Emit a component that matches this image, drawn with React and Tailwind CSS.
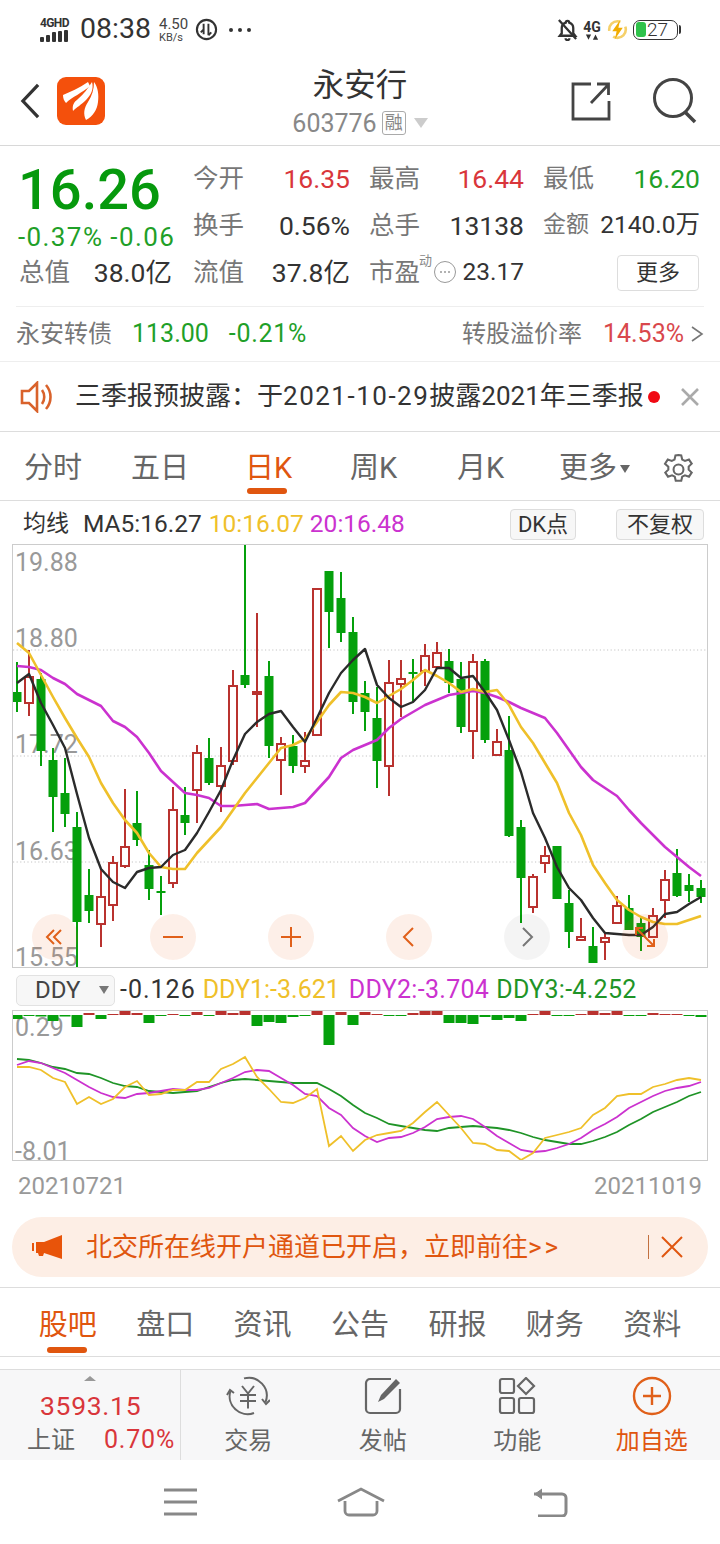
import React from "react";

const RED = "#b9322f";
const GREEN = "#05a00c";

// [kind, wickTop, wickBottom, bodyTop, bodyBottom], first candle at x=17, one every 12px
const candles = [
  ["g",662,712,692,702],["r",650,716,677,703],["g",673,766,679,751],["g",748,832,760,797],
  ["g",758,827,793,814],["g",812,967,827,922],["g",869,923,895,911],["r",868,947,897,924],
  ["r",856,921,863,905],["r",789,868,847,866],["g",791,846,823,840],["g",850,900,865,889],
  ["g",876,915,891,893],["r",787,888,810,883],["g",787,835,815,823],["r",745,823,753,790],
  ["g",738,785,758,783],["r",747,812,766,786],["r",670,765,686,761],["g",544,688,675,685],
  ["r",613,727,692,694],["g",661,758,676,746],["r",737,795,744,760],["g",735,773,746,766],
  ["r",732,773,761,766],["r",589,735,589,735],["g",571,648,571,612],["g",572,642,598,633],
  ["g",617,714,632,702],["g",681,731,693,712],["g",687,788,718,761],["r",660,796,683,766],
  ["r",660,717,679,684],["g",659,702,672,674],["r",644,686,656,671],["r",642,668,653,667],
  ["g",649,693,661,683],["g",662,733,679,727],["r",654,759,662,731],["g",659,743,661,740],
  ["r",729,756,742,755],["g",716,837,750,836],["g",820,923,827,878],["r",874,913,877,907],
  ["r",846,873,856,863],["g",846,899,846,899],["g",890,948,903,932],["r",918,940,937,940],
  ["g",927,963,946,963],["r",933,960,938,942],["r",896,923,906,923],["g",895,930,908,930],
  ["g",917,951,923,937],["r",908,937,916,937],["r",870,918,880,900],["g",849,897,873,896],
  ["g",874,902,885,891],["g",880,903,888,897],
];

const ma5 = [683,674,703,725,748,794,838,869,882,888,872,868,867,855,850,833,812,790,760,734,722,714,711,727,742,718,693,673,660,649,685,698,707,702,690,668,668,678,676,692,710,740,772,813,838,867,888,900,918,933,934,935,935,927,914,912,904,897];
const ma10 = [643,653,675,697,718,738,757,783,803,820,833,853,867,869,869,853,840,827,810,793,778,763,748,745,739,722,705,692,693,697,703,696,689,680,670,676,683,692,689,692,690,705,727,743,763,783,813,835,865,883,900,910,917,922,924,924,920,916];
const ma20 = [666,667,670,678,684,694,700,706,721,727,737,753,771,782,793,795,798,806,806,805,804,809,808,807,803,790,777,758,750,745,740,728,719,712,705,700,695,693,691,693,697,702,708,713,718,733,750,767,780,788,796,810,823,835,847,857,867,876];

const ddy1 = [1067,1067,1070,1078,1082,1104,1097,1104,1099,1087,1081,1095,1094,1090,1090,1082,1082,1069,1064,1057,1077,1089,1102,1103,1098,1089,1146,1136,1151,1140,1135,1133,1131,1123,1112,1102,1115,1128,1143,1144,1150,1151,1160,1153,1138,1135,1132,1128,1115,1108,1096,1094,1094,1087,1084,1080,1078,1080];
const ddy2 = [1065,1061,1063,1068,1073,1080,1087,1093,1097,1098,1094,1093,1091,1089,1090,1090,1088,1083,1078,1072,1070,1071,1078,1085,1094,1096,1108,1115,1128,1136,1142,1138,1137,1133,1127,1119,1117,1116,1119,1127,1136,1143,1150,1152,1151,1148,1144,1138,1130,1124,1117,1108,1102,1096,1091,1088,1086,1082];
const ddy3 = [1059,1060,1063,1067,1069,1073,1074,1078,1083,1086,1087,1091,1092,1093,1092,1091,1087,1083,1080,1079,1080,1081,1082,1083,1083,1083,1089,1096,1105,1113,1118,1124,1126,1128,1130,1131,1128,1127,1126,1127,1128,1130,1133,1137,1140,1142,1144,1144,1141,1137,1132,1125,1119,1112,1107,1102,1096,1092];

// signed bar heights around the zero line, positive is red (up)
const bars = [-4,-1,-1.5,-6,-1.5,-12,2,-4,1,4.5,2,-8,-1,1,-1,3,-1,4.5,2,4,-11,-7,-8,-2,-1,4,-30,3,-10,3,1,-1,-1,2,4,4,-8,-8,-9,-2,-5,-3,-6,1,4.5,-1,-1,1,4.5,2,4.5,-1,-1,2,1,1,-1,-2];

function pts(values) {
  return values.map((y, i) => `${17 + i * 12},${y}`).join(" ");
}

function PriceChart() {
  return (
    <svg viewBox="13 545 694 422" className="absolute left-0 top-0 w-[694px] h-[422px]">
      {[650, 756, 862].map(y => (
        <line key={y} x1="13" x2="707" y1={y} y2={y} stroke="#c4c4c4" strokeWidth="1" strokeDasharray="1.2 2.4" />
      ))}
      {candles.map(([kind, wt, wb, bt, bb], i) => {
        const x = 17 + i * 12;
        const color = kind === "g" ? GREEN : RED;
        return (
          <g key={i}>
            <line x1={x} x2={x} y1={wt} y2={wb} stroke={color} strokeWidth="2" />
            {kind === "g"
              ? <rect x={x - 4.5} y={bt} width="9" height={Math.max(bb - bt, 2)} fill={color} />
              : <rect x={x - 4} y={bt} width="8" height={Math.max(bb - bt, 2)} fill="#fff" stroke={color} strokeWidth="2" />}
          </g>
        );
      })}
      <polyline points={pts(ma20)} fill="none" stroke="#cb32cf" strokeWidth="2.6" strokeLinejoin="round" />
      <polyline points={pts(ma10)} fill="none" stroke="#efc02a" strokeWidth="2.6" strokeLinejoin="round" />
      <polyline points={pts(ma5)} fill="none" stroke="#2b2b2b" strokeWidth="2.4" strokeLinejoin="round" />
    </svg>
  );
}

function DdyChart() {
  return (
    <svg viewBox="13 1011 694 149" className="absolute left-0 top-0 w-[694px] h-[149px]">
      {bars.map((h, i) => {
        const x = 17 + i * 12;
        const up = h > 0;
        return (
          <rect key={i} x={x - 5.5} y={up ? 1015 - h : 1015} width="11" height={Math.abs(h)}
            fill={up ? RED : GREEN} />
        );
      })}
      <polyline points={pts(ddy3)} fill="none" stroke="#1f9427" strokeWidth="1.8" />
      <polyline points={pts(ddy2)} fill="none" stroke="#cb32cf" strokeWidth="1.8" />
      <polyline points={pts(ddy1)} fill="none" stroke="#efc02a" strokeWidth="1.8" />
    </svg>
  );
}

function StatusBar() {
  return (
    <div className="h-[56px] pt-[3px] flex items-center text-[#333]">
      <div className="ml-[40px] w-[32px] flex flex-col">
        <span className="text-[12px] leading-[12px] font-bold tracking-[-0.6px] whitespace-nowrap">4GHD</span>
        <div className="flex items-end gap-[2px] h-[12px] mt-[1px]">
          {[5, 7, 10, 11, 12].map(h => (
            <div key={h} className="w-[4px] bg-[#333] rounded-[1px]" style={{ height: h }} />
          ))}
        </div>
      </div>
      <span className="ml-[8px] text-[28.5px] leading-none">08:38</span>
      <div className="ml-[8px] flex flex-col items-start text-[#444]">
        <span className="text-[15px] leading-[16px]">4.50</span>
        <span className="text-[11px] leading-[12px]">KB/s</span>
      </div>
      <svg viewBox="0 0 24 24" className="ml-[7px] w-[23px] h-[23px]" fill="none" stroke="#333">
        <circle cx="12" cy="12" r="10" strokeWidth="2.2" />
        <path d="M9 6v11M14 6v12M9 12l-3 3M14 18l3-3" strokeWidth="2" />
      </svg>
      <div className="ml-[11px] flex gap-[5px]">
        {[0, 1, 2].map(i => <div key={i} className="w-[4px] h-[4px] rounded-full bg-[#333]" />)}
      </div>
      <div className="ml-auto mr-[42px] flex items-center">
        <svg viewBox="0 0 24 24" className="w-[23px] h-[23px]" fill="none" stroke="#333" strokeWidth="2.4">
          <path d="M12 3a1.8 1.8 0 0 1 1.8 1.8A6 6 0 0 1 18 10.5V16l2 2.5H4L6 16v-5.5a6 6 0 0 1 4.2-5.7A1.8 1.8 0 0 1 12 3z" />
          <path d="M10 21a2 2 0 0 0 4 0M3 2l18 20" />
        </svg>
        <div className="ml-[4px] w-[18px] flex flex-col items-center">
          <span className="text-[14px] leading-[14px] font-bold">4G</span>
          <svg viewBox="0 0 16 6" className="w-[14px] h-[6px]" fill="#333"><path d="M1 0h6L4 6zM9 6h6l-3-6z" /></svg>
        </div>
        <svg viewBox="0 0 24 24" className="ml-[6px] w-[21px] h-[23px]" fill="none">
          <circle cx="12" cy="12" r="9.5" stroke="#f5d06a" strokeWidth="3" strokeDasharray="20 8" />
          <path d="M15 1L6 14h5l-2 9 9-13h-5z" fill="#f2ad00" />
        </svg>
        <div className="ml-[5px] w-[45px] h-[20px] border-[1.5px] border-[#333] rounded-[7px] flex items-center relative">
          <div className="w-[10px] h-[15px] bg-[#2fc24a] rounded-[3px] ml-[2px]" />
          <span className="ml-[1px] text-[19px] font-light leading-none">27</span>
          <div className="absolute right-[-4px] top-[4px] w-[2px] h-[9px] bg-[#333] rounded-r-sm" />
        </div>
      </div>
    </div>
  );
}

function Header() {
  return (
    <div className="h-[90px] border-b border-[#d8d8d8] flex items-center">
      <div className="w-[228px] flex items-center">
        <svg viewBox="0 0 24 40" className="ml-[19px] w-[23px] h-[38px]" fill="none" stroke="#333" strokeWidth="3.4">
          <path d="M20 3L4 20l16 17" />
        </svg>
        <div className="ml-[15px] w-[48px] h-[48px] rounded-[9px] bg-[#f4500c]">
          <svg viewBox="0 0 48 48" className="w-[48px] h-[48px]" fill="#fff">
            <path d="M6 18C13 15 22 11 31 5L33 9C25 16 15 20 9 26 7 24 6 21 6 18z" />
            <path d="M16 34C15 28 17 25 21 22 27 17 31 11 35 5 37 12 34 18 29 23 24 28 20 30 16 34z" />
            <path d="M29 43C26 37 27 31 31 25 35 19 37 12 37 5 41 10 42 18 41 25 40 33 36 39 29 43z" />
          </svg>
        </div>
      </div>
      <div className="flex-1 flex flex-col items-center mt-[8px]">
        <span className="text-[31.5px] leading-[38px] text-[#333]">永安行</span>
        <div className="flex items-center h-[38px] mt-[-1px]">
          <span className="text-[25px] text-[#888] leading-none">603776</span>
          <span className="ml-[5px] w-[24px] h-[24px] border border-[#aaa] rounded-[3px] text-[18px] leading-[22px] text-center text-[#888]">融</span>
          <div className="ml-[8px] w-0 h-0 border-x-[7.5px] border-x-transparent border-t-[10px] border-t-[#ccc]" />
        </div>
      </div>
      <div className="w-[228px] flex items-center justify-end">
        <svg viewBox="0 0 40 40" className="w-[40px] h-[40px] mr-[41px]" fill="none" stroke="#444" strokeWidth="2.8">
          <path d="M20 3H2v35h36V20M20 22L37 4M26 3h11.5v11" />
        </svg>
        <svg viewBox="0 0 46 46" className="w-[46px] h-[46px] mr-[22px]" fill="none" stroke="#444" strokeWidth="3">
          <circle cx="21" cy="20" r="18.5" />
          <path d="M33 34l10 10" strokeWidth="3.6" />
        </svg>
      </div>
    </div>
  );
}

function Cell({ label, value, color }) {
  return (
    <div className="flex justify-between items-center">
      <span className="text-[25.5px] text-[#777]">{label}</span>
      <span className={"text-[26.5px] " + (color || "text-[#333]")}>{value}</span>
    </div>
  );
}

function Quote() {
  return (
    <div className="pt-[9px] h-[161px] mx-[16px] border-b border-[#eee] flex">
      <div className="w-[177px] pl-[2px]">
        <div className="h-[71px] text-[56px] leading-[71px] font-medium text-[#06990d]">16.26</div>
        <div className="h-[23px] flex items-center text-[26px] tracking-[1.4px] text-[#1fa028] whitespace-nowrap">
          <span>-0.37%</span><span className="ml-[7px]">-0.06</span>
        </div>
        <div className="h-[47px] flex items-center justify-between text-[#333] pl-[1px] pr-[21px] whitespace-nowrap">
          <span className="text-[25.5px] text-[#777]">总值</span>
          <span className="text-[26.5px]">38.0亿</span>
        </div>
      </div>
      <div className="flex-1 grid grid-cols-[157px_155px_157px] gap-x-[19px] auto-rows-[47px] -mr-[4px]">
        <Cell label="今开" value="16.35" color="text-[#d9363b]" />
        <Cell label="最高" value="16.44" color="text-[#d9363b]" />
        <Cell label="最低" value="16.20" color="text-[#1fa028]" />
        <Cell label="换手" value="0.56%" />
        <Cell label="总手" value="13138" />
        <div className="flex justify-between items-center whitespace-nowrap">
          <span className="text-[23px] text-[#777]">金额</span>
          <span className="text-[24.5px] text-[#333]">2140.0万</span>
        </div>
        <Cell label="流值" value="37.8亿" />
        <div className="flex items-center justify-between relative">
          <span className="text-[25.5px] text-[#777]">市盈</span>
          <span className="absolute left-[50px] top-[2px] text-[13px] text-[#888]">动</span>
          <div className="absolute left-[65px] top-[12px] w-[22px] h-[22px] rounded-full border-[1.5px] border-[#999] flex items-center justify-center gap-[1.5px]">
            {[0, 1, 2].map(i => <div key={i} className="w-[2.5px] h-[2.5px] rounded-full bg-[#999]" />)}
          </div>
          <span className="text-[24.5px] text-[#333]">23.17</span>
        </div>
        <div className="flex items-center justify-end">
          <button className="w-[82px] h-[36px] mr-[1px] border border-[#ddd] rounded-[4px] text-[22px] leading-none text-[#333]">更多</button>
        </div>
      </div>
    </div>
  );
}

function Convert() {
  return (
    <div className="h-[55px] px-[16px] flex items-center border-b border-[#eee] text-[25px] whitespace-nowrap">
      <span className="text-[24px] text-[#777]">永安转债</span>
      <span className="ml-[20px] text-[#1fa028]">113.00</span>
      <span className="ml-[20px] tracking-[0.7px] text-[#1fa028]">-0.21%</span>
      <span className="ml-auto text-[24px] text-[#777]">转股溢价率</span>
      <span className="ml-[21px] text-[#d9484c]">14.53%</span>
      <svg viewBox="0 0 14 18" className="ml-[6px] w-[14px] h-[18px]" fill="none" stroke="#777" strokeWidth="1.6"><path d="M2 2l10 7-10 7" /></svg>
    </div>
  );
}

function Notice() {
  return (
    <div className="h-[70px] flex items-center border-b border-[#ddd]">
      <svg viewBox="0 0 34 32" className="ml-[20px] w-[34px] h-[32px]" fill="none" stroke="#d9622b" strokeWidth="2.6">
        <path d="M2 10h7l8-8v28l-8-8H2zM22 9c3 4 3 10 0 14M26 4c6 7 6 17 0 24" />
      </svg>
      <div className="ml-[21px] w-[565px] whitespace-nowrap text-[26px] text-[#333]">
        三季报预披露：于<span className="tracking-[1.5px]">2021-10-29</span>披露2021年三季报
      </div>
      <div className="ml-[8px] w-[12px] h-[12px] rounded-full bg-[#f00a14]" />
      <svg viewBox="0 0 20 20" className="ml-[20px] w-[20px] h-[20px]" stroke="#aaa" strokeWidth="2.6"><path d="M2 2l16 16M18 2L2 18" /></svg>
    </div>
  );
}

function PeriodTabs() {
  const tabs = [["分时", "w-[107px]"], ["五日", "w-[114px]"], ["日K", "w-[105px]"], ["周K", "w-[107px]"], ["月K", "w-[102px]"]];
  return (
    <div className="h-[69px] pt-[6px] flex items-center border-b border-[#ddd] text-[29px] text-[#666] whitespace-nowrap">
      {tabs.map(([t, w]) => (
        <div key={t} className={w + " pl-[24px] relative " + (t === "日K" ? "text-[#e0560f]" : "")}>
          {t}
          {t === "日K" && <div className="absolute left-[26px] top-[41px] w-[40px] h-[6px] rounded-full bg-[#e0560f]" />}
        </div>
      ))}
      <div className="pl-[24px] flex items-center">
        <span>更多</span>
        <div className="ml-[3px] w-0 h-0 border-x-[5px] border-x-transparent border-t-[8px] border-t-[#666]" />
      </div>
      <svg viewBox="0 0 24 24" className="ml-[32px] w-[33px] h-[33px]" fill="none" stroke="#666" strokeWidth="1.5">
        <path d="M12 1.5l2 .3.7 3 2 1 2.9-1 2 3-2.2 2.1v2.2l2.2 2.1-2 3-2.9-1-2 1-.7 3h-4l-.7-3-2-1-2.9 1-2-3 2.2-2.1v-2.2L2.2 7.8l2-3 2.9 1 2-1 .7-3z" />
        <circle cx="12" cy="12" r="3.6" />
      </svg>
    </div>
  );
}

function MaRow() {
  return (
    <div className="h-[43px] pt-[3px] flex items-center text-[24.5px] whitespace-nowrap">
      <span className="ml-[23px] text-[23px] text-[#333]">均线</span>
      <span className="ml-[14px] text-[#333]">MA5:16.27</span>
      <span className="ml-[7px] text-[#efc02a]">10:16.07</span>
      <span className="ml-[6px] text-[#cb32cf]">20:16.48</span>
      <div className="ml-auto mr-[16px] flex gap-[40px] text-[#333]">
        <div className="w-[66px] h-[31px] bg-[#f7f7f7] border border-[#ddd] rounded-[4px] text-[22px] leading-[29px] text-center">DK点</div>
        <div className="w-[88px] h-[31px] bg-[#f7f7f7] border border-[#ddd] rounded-[4px] text-[22px] leading-[29px] text-center">不复权</div>
      </div>
    </div>
  );
}

function RoundBtn({ left, grey, children }) {
  return (
    <div style={{ left }} className={"absolute top-[369px] w-[46px] h-[46px] rounded-full flex items-center justify-center " + (grey ? "bg-[#0000000b]" : "bg-[#e8601c1a]")}>
      <svg viewBox="0 0 24 24" className="w-[24px] h-[24px]" fill="none" stroke={grey ? "#777" : "#e0601a"} strokeWidth="2">
        {children}
      </svg>
    </div>
  );
}

function Axis({ top, children }) {
  return <span style={{ top }} className="absolute left-[2px] text-[25px] leading-[30px] text-[#999]">{children}</span>;
}

function MainChart() {
  return (
    <div className="mx-[12px] h-[424px] border border-[#ccc] relative">
      <Axis top={3}>19.88</Axis>
      <Axis top={79}>18.80</Axis>
      <Axis top={185}>17.72</Axis>
      <Axis top={292}>16.63</Axis>
      <Axis top={398}>15.55</Axis>
      <PriceChart />
      <RoundBtn left={19}><path d="M11 5l-7 7 7 7M18 5l-7 7 7 7" /></RoundBtn>
      <RoundBtn left={137}><path d="M2 12h20" /></RoundBtn>
      <RoundBtn left={255}><path d="M2 12h20M12 2v20" /></RoundBtn>
      <RoundBtn left={373}><path d="M16 3l-9 9 9 9" /></RoundBtn>
      <RoundBtn left={491} grey><path d="M8 3l9 9-9 9" /></RoundBtn>
      <RoundBtn left={609}><path d="M3 10V3h7M3 3l18 18M21 14v7h-7" /></RoundBtn>
    </div>
  );
}

function DdyRow() {
  return (
    <div className="h-[42px] pt-[2px] flex items-center whitespace-nowrap text-[25px]">
      <div className="ml-[16px] w-[99px] h-[31px] bg-[#f7f7f7] border border-[#e2e2e2] rounded-[5px] flex items-center text-[#444]">
        <span className="ml-[18px] text-[24px] leading-none">DDY</span>
        <div className="ml-[19px] w-0 h-0 border-x-[5px] border-x-transparent border-t-[8px] border-t-[#777]" />
      </div>
      <span className="ml-[5px] tracking-[1px] text-[#333]">-0.126</span>
      <span className="ml-[7px] text-[#efc02a]">DDY1:-3.621</span>
      <span className="ml-[9px] tracking-[0.3px] text-[#cb32cf]">DDY2:-3.704</span>
      <span className="ml-[7px] tracking-[0.3px] text-[#1f9427]">DDY3:-4.252</span>
    </div>
  );
}

function SubChart() {
  return (
    <>
      <div className="mx-[12px] h-[151px] border border-[#ccc] relative">
        <span className="absolute left-[2px] top-[2px] text-[25px] leading-[30px] text-[#999]">0.29</span>
        <span className="absolute left-[2px] top-[126px] text-[25px] leading-[30px] text-[#999]">-8.01</span>
        <DdyChart />
      </div>
      <div className="h-[49px] pt-[1px] px-[18px] flex items-center justify-between text-[24px] text-[#999]">
        <span>20210721</span>
        <span>20211019</span>
      </div>
    </>
  );
}

function Banner() {
  return (
    <div className="h-[78px] pt-[7px] border-b border-[#ddd]">
      <div className="mx-[12px] h-[60px] rounded-full bg-[#fdeee5] flex items-center whitespace-nowrap text-[#e0560f]">
        <svg viewBox="0 0 30 24" className="ml-[20px] w-[30px] h-[24px]" fill="#e8540a">
          <rect x="0" y="8" width="2" height="8" />
          <path d="M4 7h8L30 0v24l-18-6-1 3H7l-1-3H4z" />
        </svg>
        <span className="ml-[24px] text-[26px]">北交所在线开户通道已开启，立即前往<span className="tracking-[3px]">&gt;&gt;</span></span>
        <div className="ml-auto w-[1px] h-[24px] bg-[#c2703f]" />
        <svg viewBox="0 0 22 22" className="ml-[12px] mr-[25px] w-[22px] h-[22px]" stroke="#e0560f" strokeWidth="2"><path d="M1 1l20 20M21 1L1 21" /></svg>
      </div>
    </div>
  );
}

function SubTabs() {
  const tabs = ["股吧", "盘口", "资讯", "公告", "研报", "财务", "资料"];
  return (
    <div className="h-[69px] pt-[8px] px-[19px] grid grid-cols-7 items-center border-b border-[#ddd] text-[29px] text-[#666] whitespace-nowrap">
      {tabs.map((t, i) => (
        <div key={t} className={"text-center relative " + (i === 0 ? "text-[#e0560f]" : "")}>
          {t}
          {i === 0 && <div className="absolute left-[28px] top-[43px] w-[40px] h-[6px] rounded-full bg-[#e0560f]" />}
        </div>
      ))}
    </div>
  );
}

function ToolItem({ label, active, children }) {
  return (
    <div className="flex flex-col items-center">
      <div className="h-[52px] flex items-center justify-center">{children}</div>
      <span className={"mt-[4px] text-[24px] leading-[30px] " + (active ? "text-[#e0560f]" : "text-[#666]")}>{label}</span>
    </div>
  );
}

function Toolbar() {
  return (
    <div className="mt-[12px] h-[91px] border-t border-[#ddd] bg-[#f7f7f8] flex">
      <div className="w-[181px] border-r border-[#ddd] relative">
        <div className="absolute left-[84px] top-[6px] w-0 h-0 border-x-[6.5px] border-x-transparent border-b-[5px] border-b-[#999]" />
        <div className="pt-[20px] pl-[40px] text-[26.5px] tracking-[0.7px] leading-[32px] text-[#d9363b]">3593.15</div>
        <div className="mt-[1px] pl-[27px] pr-[5px] flex justify-between items-center text-[25px] leading-[34px]">
          <span className="text-[24px] text-[#666]">上证</span>
          <span className="tracking-[0.8px] text-[#d9363b]">0.70%</span>
        </div>
      </div>
      <div className="flex-1 grid grid-cols-4 pr-[1px]">
        <ToolItem label="交易">
          <svg viewBox="0 0 44 42" className="w-[44px] h-[42px]" fill="none" stroke="#666" strokeWidth="2">
            <path d="M18 3.4A18 18 0 0 1 39.6 27M28 38A18 18 0 0 1 4.4 16" />
            <path d="M36 24l4 5 4-4M1 20l3-5 4 3" />
            <path d="M16 11l6 7.5L28 11M14 20h16M14 26h16M22 18.500v15" />
          </svg>
        </ToolItem>
        <ToolItem label="发帖">
          <svg viewBox="0 0 38 38" className="w-[38px] h-[38px]" fill="none" stroke="#666" strokeWidth="2.2">
            <path d="M27 2H6a4 4 0 0 0-4 4v26a4 4 0 0 0 4 4h26a4 4 0 0 0 4-4V12" />
            <path d="M14 25l3-7L32 2l4 4-16 16z" fill="#666" stroke="none" />
          </svg>
        </ToolItem>
        <ToolItem label="功能">
          <svg viewBox="0 0 38 38" className="w-[38px] h-[38px]" fill="none" stroke="#666" strokeWidth="2.2">
            <rect x="2" y="2" width="14" height="14" rx="2" />
            <path d="M28 1l8 8-8 8-8-8z" />
            <rect x="2" y="21" width="14" height="15" rx="2" />
            <rect x="21" y="21" width="15" height="15" rx="2" />
          </svg>
        </ToolItem>
        <ToolItem label="加自选" active>
          <svg viewBox="0 0 40 40" className="w-[40px] h-[40px]" fill="none" stroke="#e0601a" strokeWidth="2.4">
            <circle cx="20" cy="20" r="18" />
            <path d="M11 20h18M20 11v18" />
          </svg>
        </ToolItem>
      </div>
    </div>
  );
}

function NavBar() {
  return (
    <div className="h-[84px] flex items-center pb-[1px] bg-white">
      <svg viewBox="0 0 34 28" className="ml-[164px] w-[34px] h-[28px]" stroke="#888" strokeWidth="3"><path d="M0 2h33M0 14h33M0 26h33" /></svg>
      <svg viewBox="0 0 48 30" className="ml-[139px] w-[48px] h-[30px]" fill="none" stroke="#888" strokeWidth="2.8">
        <path d="M1 14L24 2l23 12M8 14v10a4 4 0 0 0 4 4h24a4 4 0 0 0 4-4V14" />
      </svg>
      <svg viewBox="0 0 36 30" className="ml-[147px] w-[36px] h-[30px]" fill="none" stroke="#888" strokeWidth="3">
        <path d="M2 7h28a4 4 0 0 1 4 4v14a4 4 0 0 1-4 4H6" />
        <path d="M10 2L3 7l7 5" fill="#888" strokeWidth="1" />
      </svg>
    </div>
  );
}

export default function App() {
  return (
    <div className="w-[720px] h-[1544px] overflow-hidden bg-white font-['Roboto','Noto_Sans_CJK_SC',sans-serif]">
      <StatusBar />
      <Header />
      <Quote />
      <Convert />
      <Notice />
      <PeriodTabs />
      <MaRow />
      <MainChart />
      <DdyRow />
      <SubChart />
      <Banner />
      <SubTabs />
      <Toolbar />
      <NavBar />
    </div>
  );
}
